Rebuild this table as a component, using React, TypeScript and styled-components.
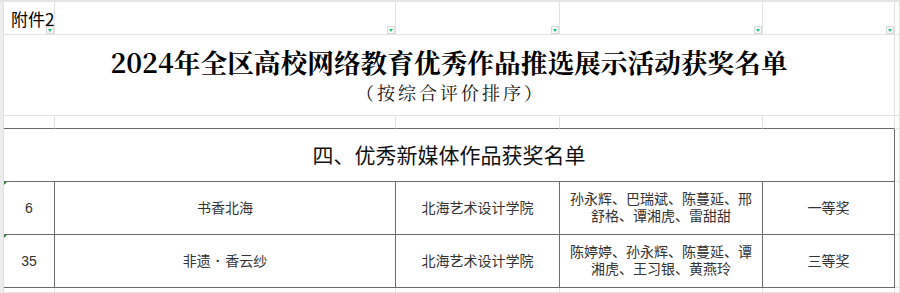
import styled, { createGlobalStyle, css } from 'styled-components';

const GlobalStyle = createGlobalStyle`
  html, body {
    margin: 0;
    padding: 0;
    background: #ffffff;
    overflow: hidden;
  }
`;

const LIGHT = '#e3e3e3';
const DARK = '#6b6b6b';

const Window = styled.div`
  width: 900px;
  height: 293px;
  display: flex;
  flex-direction: column;
  background: #ffffff;
  border-top: 2px solid #e4e4e4;
  box-sizing: border-box;
`;

const Body = styled.div`
  flex: 1;
  display: flex;
`;

const Gutter = styled.div`
  width: 4px;
  background: #ededed;
  border-right: 1px solid #e0e0e0;
  box-sizing: border-box;
`;

const Sheet = styled.div`
  flex: 1;
  display: grid;
  grid-template-columns: 51px 341px 164px 203px 132px 1fr;
  grid-template-rows: 33px 81px 13px 53px 53px 53px 1fr;
`;

type Line = 'light' | 'dark';

const Cell = styled.div<{ $right?: Line; $bottom?: Line; $span?: number }>`
  position: relative;
  box-sizing: border-box;
  min-width: 0;
  border-right: 1px solid ${({ $right }) => ($right === 'dark' ? DARK : LIGHT)};
  border-bottom: 1px solid ${({ $bottom }) => ($bottom === 'dark' ? DARK : LIGHT)};
  ${({ $span }) =>
    $span &&
    css`
      grid-column: span ${$span};
    `}
`;

const LabelCell = styled(Cell)`
  display: flex;
  align-items: center;
  padding-left: 7px;
  font-family: 'Noto Sans CJK SC', 'Liberation Sans', sans-serif;
  font-size: 17px;
  color: #000;
  white-space: nowrap;
`;

const TitleCell = styled(Cell)`
  display: flex;
  flex-direction: column;
  align-items: center;
  padding-top: 11px;
`;

const Title = styled.h1`
  margin: 0;
  font-family: 'Noto Serif CJK SC', 'Liberation Serif', 'Noto Sans CJK SC', serif;
  font-weight: 700;
  font-size: 26.7px;
  line-height: 32px;
  color: #000;
  white-space: nowrap;
`;

const Subtitle = styled.div`
  margin-top: 3px;
  padding-left: 3px;
  font-family: 'Noto Serif CJK SC', 'Liberation Serif', 'Noto Sans CJK SC', serif;
  font-size: 18px;
  line-height: 22px;
  letter-spacing: 3px;
  color: #111;
  white-space: nowrap;
`;

const SectionCell = styled(Cell)`
  display: flex;
  align-items: center;
  justify-content: center;
  padding-bottom: 2px;
  font-family: 'Noto Sans CJK SC', sans-serif;
  font-size: 21px;
  color: #111;
`;

const DataCell = styled(Cell)`
  display: flex;
  align-items: center;
  justify-content: center;
  text-align: center;
  padding: 0 8px;
  font-family: 'Liberation Sans', 'Noto Sans CJK SC', sans-serif;
  font-size: 14px;
  line-height: 17px;
  color: #333;
`;

const FirstDataCell = styled(DataCell)`
  &::before {
    content: '';
    position: absolute;
    left: 0;
    top: 0;
    border-top: 3px solid #2a8a3a;
    border-right: 3px solid transparent;
  }
`;

const Dot = styled.span`
  margin: 0 5px;
  font-weight: 700;
`;

const FilterButton = styled.span`
  position: absolute;
  right: 0;
  bottom: 0;
  width: 8px;
  height: 8px;
  box-sizing: border-box;
  border: 1px solid #dadada;
  background: #f7f7f7;
  display: flex;
  align-items: center;
  justify-content: center;

  &::after {
    content: '';
    border-top: 3px solid #1fbf7a;
    border-left: 2px solid transparent;
    border-right: 2px solid transparent;
  }
`;

interface Award {
  id: string;
  work: React.ReactNode;
  school: string;
  authors: string;
  prize: string;
}

const awards: Award[] = [
  {
    id: '6',
    work: '书香北海',
    school: '北海艺术设计学院',
    authors: '孙永辉、巴瑞斌、陈蔓延、邢舒格、谭湘虎、雷甜甜',
    prize: '一等奖',
  },
  {
    id: '35',
    work: (
      <>
        非遗<Dot>·</Dot>香云纱
      </>
    ),
    school: '北海艺术设计学院',
    authors: '陈婷婷、孙永辉、陈蔓延、谭湘虎、王习银、黄燕玲',
    prize: '三等奖',
  },
];

const App: React.FC = () => {
  return (
    <Window>
      <GlobalStyle />
      <Body>
        <Gutter />
        <Sheet>
          <LabelCell>
            附件2
            <FilterButton />
          </LabelCell>
          {[0, 1, 2, 3].map((i) => (
            <Cell key={`f${i}`}>
              <FilterButton />
            </Cell>
          ))}
          <Cell />

          <TitleCell $span={5}>
            <Title>2024年全区高校网络教育优秀作品推选展示活动获奖名单</Title>
            <Subtitle>（按综合评价排序）</Subtitle>
          </TitleCell>
          <Cell />

          {[0, 1, 2, 3, 4].map((i) => (
            <Cell key={`g${i}`} $bottom="dark" />
          ))}
          <Cell />

          <SectionCell $span={5} $right="dark" $bottom="dark">
            四、优秀新媒体作品获奖名单
          </SectionCell>
          <Cell />

          {awards.map((a) => [
            <FirstDataCell key={`${a.id}-id`} $right="dark" $bottom="dark">
              {a.id}
            </FirstDataCell>,
            <DataCell key={`${a.id}-work`} $right="dark" $bottom="dark">
              {a.work}
            </DataCell>,
            <DataCell key={`${a.id}-school`} $right="dark" $bottom="dark">
              {a.school}
            </DataCell>,
            <DataCell key={`${a.id}-authors`} $right="dark" $bottom="dark">
              {a.authors}
            </DataCell>,
            <DataCell key={`${a.id}-prize`} $right="dark" $bottom="dark">
              {a.prize}
            </DataCell>,
            <Cell key={`${a.id}-rest`} />,
          ])}

          {[0, 1, 2, 3, 4, 5].map((i) => (
            <Cell key={`b${i}`} />
          ))}
        </Sheet>
      </Body>
    </Window>
  );
};

export default App;
